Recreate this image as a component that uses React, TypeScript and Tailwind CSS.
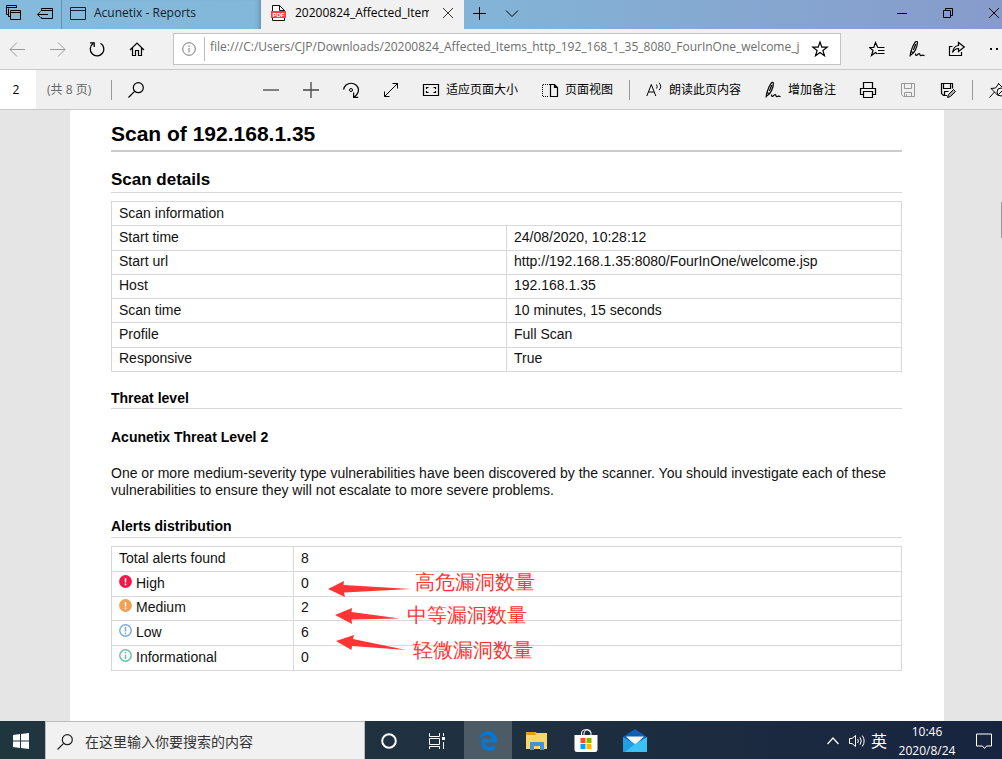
import React from 'react'
import { FaEdgeLegacy } from 'react-icons/fa6'

interface IconProps {
  children: React.ReactNode
  className?: string
}

function Icon({ children, className = '' }: IconProps) {
  return (
    <svg
      viewBox="0 0 16 16"
      className={`w-4 h-4 shrink-0 overflow-visible ${className}`}
      fill="none"
      stroke="currentColor"
      aria-hidden="true"
    >
      {children}
    </svg>
  )
}

function PenIcon() {
  return (
    <Icon>
      <path
        d="M1 15.5 L1.8 11 Q3.4 5 6 1.3 Q7.6 -.3 8.4 1 Q8.6 4 6.6 8.5 Q5 12.5 1.8 14 M2.2 10.8 L4.8 11.6 M4.4 9 L6.8 3 M6.6 12.6 Q6.2 15 8 14.2 Q10 11.8 10.8 13 Q10.8 15 12.4 14.4 Q13.6 13.6 15.5 14.6"
        strokeWidth="1.2"
      />
    </Icon>
  )
}

function SearchIcon() {
  return (
    <Icon>
      <circle cx="10.3" cy="5.7" r="5" strokeWidth="1.2" />
      <path d="M6.6 9.4 L.5 15.5" strokeWidth="1.2" />
    </Icon>
  )
}

function Separator() {
  return <span className="w-px h-5 -mx-2 shrink-0 bg-[#999]" />
}

interface ToolButtonProps {
  title: string
  label?: string
  className?: string
  children: React.ReactNode
}

function ToolButton({ title, label, className = '', children }: ToolButtonProps) {
  return (
    <button type="button" title={title} className={`flex items-center gap-[7px] shrink-0 whitespace-nowrap ${className}`}>
      {children}
      {label && <span>{label}</span>}
    </button>
  )
}

function TabStrip() {
  return (
    <div className="flex items-stretch h-[29px] text-[#16202a] bg-linear-to-r from-[#84bbdc] via-[#83b3d6] to-[#879bcb]">
      <div className="flex items-center gap-4 pl-[5px] pr-2 pb-[3px] border-r border-[#6692b0] text-black">
        <ToolButton title="标签页">
          <Icon>
            <path d="M3 9.5 H1.5 V.5 H11.5 V3 M1.5 2.5 H11.5 M5 11.5 H3.5 V3.5 M5.5 5.5 H15.5 V14.5 H5.5 Z M5.5 7.5 H15.5" />
          </Icon>
        </ToolButton>
        <ToolButton title="搁置标签页">
          <Icon>
            <path d="M4.5 6 V3.5 H15.5 V13.5 H4.5 V12 M4.5 5.5 H15.5 M.5 9.5 H11 M3.5 6.5 L.5 9.5 L3.5 12.5" />
          </Icon>
        </ToolButton>
      </div>
      <button type="button" className="flex items-center gap-2 w-[199px] pl-2 pb-[3px] shadow-[inset_-5px_0_5px_-4px_rgba(40,80,120,0.45)]">
        <Icon>
          <path d="M.5 2.5 H15.5 V14.5 H.5 Z M.5 5.5 H15.5" />
        </Icon>
        <span>Acunetix - Reports</span>
      </button>
      <div className="flex items-center w-[203px] px-2 bg-[#f1f1f1]">
        <svg viewBox="0 0 18 18" className="w-[18px] h-[18px] shrink-0 -mt-[3px]" aria-hidden="true">
          <path d="M3.5 1.5 H10.5 L15.5 6.5 V16.5 H3.5 Z" fill="#fff" stroke="#111" />
          <path d="M10.5 1.5 V6.5 H15.5" fill="none" stroke="#111" />
          <rect x="2" y="7" width="15" height="7" fill="#f34045" />
          <text x="9.5" y="12.7" fontSize="6" fontWeight="bold" fontFamily="Liberation Sans" textAnchor="middle" fill="#fff">PDF</text>
        </svg>
        <span className="w-[134px] ml-2 mb-[3px] overflow-hidden whitespace-nowrap text-black">20200824_Affected_Items_http</span>
        <ToolButton title="关闭标签页" className="ml-auto mb-[3px]">
          <Icon className="text-[#333]">
            <path d="M3 3 L13 13 M13 3 L3 13" />
          </Icon>
        </ToolButton>
      </div>
      <div className="flex items-center gap-4 pl-2 pb-[3px] text-black">
        <ToolButton title="新建标签页">
          <Icon>
            <path d="M7.5 2 V15 M1 8.5 H14" />
          </Icon>
        </ToolButton>
        <ToolButton title="标签页预览">
          <Icon>
            <path d="M2 5.5 L8 11.5 L14 5.5" />
          </Icon>
        </ToolButton>
      </div>
      <div className="flex items-center gap-[30px] ml-auto pb-[3px] text-black">
        <ToolButton title="最小化">
          <Icon>
            <path d="M3 8.5 H13" />
          </Icon>
        </ToolButton>
        <ToolButton title="还原">
          <Icon>
            <path d="M3.5 5.5 H10.5 V12.5 H3.5 Z M5.5 5 V3.5 H12.5 V10.5 H11" />
          </Icon>
        </ToolButton>
        <ToolButton title="关闭">
          <Icon>
            <path d="M3 3 L13 13 M13 3 L3 13" />
          </Icon>
        </ToolButton>
      </div>
    </div>
  )
}

function AddressBar() {
  return (
    <div className="flex items-center h-[41px] pl-[9px] bg-[#f1f1f1] border-b border-[#c9c9c9] text-black">
      <div className="flex gap-6">
        <ToolButton title="后退" className="text-[#999]">
          <Icon>
            <path d="M1 8.5 H16 M8 1.5 L1 8.5 L8 15.5" />
          </Icon>
        </ToolButton>
        <ToolButton title="前进" className="text-[#999]">
          <Icon>
            <path d="M1 8.5 H16 M9 1.5 L16 8.5 L9 15.5" />
          </Icon>
        </ToolButton>
        <ToolButton title="刷新">
          <Icon>
            <path d="M11.5 2.2 A6.8 6.8 0 1 1 4 2.6 M1 1.8 H5.2 V6" strokeWidth="1.3" />
          </Icon>
        </ToolButton>
        <ToolButton title="主页">
          <Icon>
            <path d="M1 9 L8 2 L15 9 M3.5 7 V14.5 H6.5 V9.5 H9.5 V14.5 H12.5 V7" strokeWidth="1.2" />
          </Icon>
        </ToolButton>
      </div>
      <div className="flex items-center flex-1 h-8 ml-7 mr-7 px-2 bg-white border border-[#c4c4c4]">
        <svg viewBox="0 0 14 14" className="w-[14px] h-[14px] shrink-0" fill="none" stroke="#777" aria-hidden="true">
          <circle cx="7" cy="7" r="6.3" />
          <path d="M7 6 V10.5 M7 3.5 V5" />
        </svg>
        <span className="w-px h-6 ml-2 mr-[5px] bg-[#bbb]" />
        <input
          type="text"
          aria-label="地址"
          className="flex-1 min-w-0 mb-1 mr-3 text-[#6d6d6d] outline-none"
          defaultValue="file:///C:/Users/CJP/Downloads/20200824_Affected_Items_http_192_168_1_35_8080_FourInOne_welcome_jsp.pdf"
        />
        <ToolButton title="收藏" className="mr-1">
          <Icon>
            <path d="M8 1 L9.8 6.2 H15.2 L10.9 9.5 L12.5 14.8 L8 11.6 L3.5 14.8 L5.1 9.5 L.8 6.2 H6.2 Z" strokeWidth="1.2" />
          </Icon>
        </ToolButton>
      </div>
      <div className="flex gap-6 w-[133px] overflow-hidden">
        <ToolButton title="收藏夹">
          <Icon>
            <path d="M15.5 6.5 H8.8 L6.5 1.5 L4.8 6.5 H.5 L4 9.5 L2.5 14.5 L6.5 11.6 L8.5 13 M9 9.5 H15.5 M9 12.5 H15.5" strokeWidth="1.2" />
          </Icon>
        </ToolButton>
        <ToolButton title="添加笔记">
          <PenIcon />
        </ToolButton>
        <ToolButton title="共享">
          <Icon>
            <path d="M3.5 5.5 H.5 V14.5 H12.5 V11 M3.5 11.5 Q4.5 5 9.5 4.5 V1.5 L15.3 6 L9.5 10.5 V7.5 Q6 7.5 3.5 11.5 Z" strokeWidth="1.2" />
          </Icon>
        </ToolButton>
        <ToolButton title="更多">
          <Icon>
            <path d="M1 8 H3 M7 8 H9 M13 8 H15" strokeWidth="2" />
          </Icon>
        </ToolButton>
      </div>
    </div>
  )
}

function PdfToolbar() {
  return (
    <div className="flex items-center h-10 overflow-hidden bg-[#f0f0f0] border-b border-[#c9c9c9] text-black">
      <input type="text" aria-label="页码" defaultValue="2" className="w-9 h-full pr-1 bg-white text-center" />
      <span className="ml-[11px] text-[#666]">(共 8 页)</span>
      <span className="w-px h-5 ml-5 mr-4 bg-[#999]" />
      <ToolButton title="查找">
        <SearchIcon />
      </ToolButton>
      <div className="flex items-center gap-6 ml-auto -mr-[3px] shrink-0">
        <ToolButton title="缩小" className="text-[#444]">
          <Icon>
            <path d="M0 8 H16" strokeWidth="1.3" />
          </Icon>
        </ToolButton>
        <ToolButton title="放大" className="text-[#444]">
          <Icon>
            <path d="M0 8 H16 M8 0 V16" strokeWidth="1.3" />
          </Icon>
        </ToolButton>
        <ToolButton title="旋转">
          <Icon>
            <path d="M.6 7.6 A7.5 7.2 0 0 1 15.5 7.6 Q15.5 12 11.2 15 M10.6 10.5 V15.4 H15.2" strokeWidth="1.2" />
            <circle cx="8" cy="8" r="1.5" />
          </Icon>
        </ToolButton>
        <ToolButton title="全屏">
          <Icon>
            <path d="M1.5 14.5 L14.5 1.5 M9.5 1.5 H14.5 V6.5 M1.5 9.5 V14.5 H6.5" />
          </Icon>
        </ToolButton>
        <ToolButton title="适应页面大小" label="适应页面大小">
          <Icon>
            <path d="M.5 2.5 H15.5 V13.5 H.5 Z M3.5 7 V5.5 H5.5 M10.5 5.5 H12.5 V7 M12.5 9 V10.5 H10.5 M5.5 10.5 H3.5 V9" strokeWidth="1.2" />
          </Icon>
        </ToolButton>
        <ToolButton title="页面视图" label="页面视图">
          <Icon>
            <path d="M8 2.5 H.5 V14.5 H7" strokeDasharray="1 1" />
            <path d="M8.5 2.5 H12.5 L15.5 5.5 V14.5 H8.5 Z M12.5 2.5 V5.5 H15.5" strokeWidth="1.2" />
          </Icon>
        </ToolButton>
        <Separator />
        <ToolButton title="朗读此页内容" label="朗读此页内容">
          <Icon>
            <path d="M.8 14 L5.3 2.5 L9.8 14 M2.4 10 H8.2 M10.5 2.5 Q12 4.5 10.5 6.5 M13 .8 Q16.5 4.5 13 8.2" />
          </Icon>
        </ToolButton>
        <ToolButton title="增加备注" label="增加备注">
          <PenIcon />
        </ToolButton>
        <ToolButton title="打印">
          <Icon>
            <path d="M3.5 6 V.5 H12.5 V6 M3.5 12.5 H.5 V6.5 H15.5 V12.5 H12.5 M3.5 9.5 H12.5 V15.5 H3.5 Z" strokeWidth="1.2" />
          </Icon>
        </ToolButton>
        <ToolButton title="保存" className="text-[#999]">
          <Icon>
            <path d="M1.5 1.5 H14.5 V14.5 H3.5 L1.5 12.5 Z M4.5 1.5 V6.5 H11.5 V1.5 M4.5 14.5 V10.5 H11.5 V14.5 M6.5 12 V14.5" />
          </Icon>
        </ToolButton>
        <ToolButton title="另存为">
          <Icon>
            <path d="M7 13.5 H3.5 L1.5 11.5 V1.5 H12.5 V6.5 M3.5 1.5 V6.5 H10.5 V1.5 M4.5 13.5 V9.5 H8.5" strokeWidth="1.2" />
            <path d="M7.5 15.5 L8.5 12.5 L13.5 7.5 L15.5 9.5 L10.5 14.5 Z" fill="#aaa" />
          </Icon>
        </ToolButton>
        <Separator />
        <ToolButton title="固定工具栏">
          <Icon>
            <path d="M9 1 L15 7 M9.5 2 L6.5 6 L2 6.5 L9.5 14 M5.5 10 L.5 15.5" />
            <circle cx="12" cy="10" r="4" />
            <path d="M9.5 12.5 L14.5 7.5" />
          </Icon>
        </ToolButton>
      </div>
    </div>
  )
}

const scanRows = [
  { label: 'Start time', value: '24/08/2020, 10:28:12' },
  { label: 'Start url', value: 'http://192.168.1.35:8080/FourInOne/welcome.jsp' },
  { label: 'Host', value: '192.168.1.35' },
  { label: 'Scan time', value: '10 minutes, 15 seconds' },
  { label: 'Profile', value: 'Full Scan' },
  { label: 'Responsive', value: 'True' }
]

const alertRows = [
  { label: 'High', value: 0, fill: '#f5174a', stroke: '#f5174a', mark: '#fff', info: false },
  { label: 'Medium', value: 2, fill: '#f0a050', stroke: '#f0a050', mark: '#fff', info: false },
  { label: 'Low', value: 6, fill: '#fff', stroke: '#77abe4', mark: '#77abe4', info: false },
  { label: 'Informational', value: 0, fill: '#fff', stroke: '#5cc3a4', mark: '#5cc3a4', info: true }
]

interface CellProps {
  children: React.ReactNode
  colSpan?: number
  className?: string
}

function Cell({ children, colSpan, className = '' }: CellProps) {
  return (
    <td colSpan={colSpan} className={`px-[7px] pb-[2px] border border-[#d8d8d8] ${className}`}>
      {children}
    </td>
  )
}

function Annotations() {
  return (
    <div className="absolute left-[217px] top-[22px] w-[220px] h-[100px] text-[20px] leading-7 text-[#ff3535]">
      <svg viewBox="0 0 90 90" className="absolute left-0 top-0 w-[90px] h-[90px]" fill="#ff3535" aria-hidden="true">
        <path d="M0 21 L16 13 L15.5 17 L83 21 L16 24.5 L17 29 Z" />
        <path d="M7 47 L24 40 L23.5 44 L72 50.5 L23.5 51.5 L24 56 Z" />
        <path d="M8 73 L26 67 L25 71 L78 82 L24 78 L23.5 82 Z" />
      </svg>
      <span className="absolute left-[87px] top-0 whitespace-nowrap">高危漏洞数量</span>
      <span className="absolute left-[79px] top-[33px] whitespace-nowrap">中等漏洞数量</span>
      <span className="absolute left-[85px] top-[68px] whitespace-nowrap">轻微漏洞数量</span>
    </div>
  )
}

function Report() {
  return (
    <article className="flex-1 pt-3 pl-[41px] pr-[42px] pb-12 bg-white text-sm leading-4 text-[#111] font-['Liberation_Sans',Arial,sans-serif]">
      <h1 className="pb-1 border-b-2 border-[#ccc] text-[21px] leading-6 font-bold text-black">Scan of 192.168.1.35</h1>
      <h2 className="mt-[18px] pb-[2px] border-b border-[#d8d8d8] text-[17px] leading-5 font-bold text-black">Scan details</h2>

      <table className="w-full h-[171px] mt-2 border-collapse table-fixed">
        <tbody>
          <tr>
            <Cell colSpan={2}>Scan information</Cell>
          </tr>
          {scanRows.map((row) => (
            <tr key={row.label}>
              <Cell>{row.label}</Cell>
              <Cell>{row.value}</Cell>
            </tr>
          ))}
        </tbody>
      </table>

      <h3 className="mt-[18px] pb-[2px] border-b border-[#d8d8d8] font-bold text-black">Threat level</h3>
      <h4 className="mt-5 font-bold text-black">Acunetix Threat Level 2</h4>
      <p className="mt-5 leading-[17px]">
        One or more medium-severity type vulnerabilities have been discovered by the scanner. You should investigate each of these
        vulnerabilities to ensure they will not escalate to more severe problems.
      </p>

      <h3 className="mt-[19px] pb-[3px] border-b border-[#d8d8d8] font-bold text-black">Alerts distribution</h3>
      <div className="relative mt-2">
        <table className="w-full h-[125px] border-collapse table-fixed">
          <tbody>
            <tr>
              <Cell className="w-[182px]">Total alerts found</Cell>
              <Cell>8</Cell>
            </tr>
            {alertRows.map((row) => (
              <tr key={row.label}>
                <Cell>
                  <span className="flex items-start gap-1">
                    <svg viewBox="0 0 13 13" className="w-[13px] h-[13px]" aria-hidden="true">
                      <circle cx="6.5" cy="6.5" r="5.7" fill={row.fill} stroke={row.stroke} strokeWidth="1.4" />
                      <path
                        d={row.info ? 'M6.5 5.8 V10 M6.5 3 V4.6' : 'M6.5 3 V7.4 M6.5 8.6 V10.2'}
                        stroke={row.mark}
                        strokeWidth="1.5"
                      />
                    </svg>
                    {row.label}
                  </span>
                </Cell>
                <Cell>{row.value}</Cell>
              </tr>
            ))}
          </tbody>
        </table>
        <Annotations />
      </div>
    </article>
  )
}

function Taskbar() {
  return (
    <div className="flex items-start h-[38px] overflow-hidden text-white bg-linear-to-r from-[#20363f] via-[#1f3040] to-[#17243f]">
      <button type="button" title="开始" className="flex items-center justify-center w-[45px] h-10 pr-1">
        <Icon>
          <path d="M0 2 L7 1 V7.5 H0 Z M8 .9 L16 0 V7.5 H8 Z M0 8.5 H7 V15 L0 14 Z M8 8.5 H16 V16 L8 15.1 Z" fill="#fff" stroke="none" />
        </Icon>
      </button>
      <label className="flex items-center gap-3 w-80 h-10 pl-[11px] bg-[#f1f1f1] border-t border-x border-[#bbb] text-[#222]">
        <SearchIcon />
        <input
          type="text"
          aria-label="搜索"
          placeholder="在这里输入你要搜索的内容"
          className="flex-1 min-w-0 text-sm placeholder:text-[#333] outline-none"
        />
      </label>
      <button type="button" title="Cortana" className="flex items-center justify-center w-12 h-10">
        <Icon>
          <circle cx="8" cy="8" r="6.8" strokeWidth="2" />
        </Icon>
      </button>
      <button type="button" title="任务视图" className="flex items-center justify-center w-[51px] h-10 pr-[3px]">
        <Icon>
          <path d="M.5 0 V3.5 H10.5 V0 M.5 5.5 H10.5 V11.5 H.5 Z M.5 16 V13.5 H10.5 V16 M14.5 0 V3 M14.5 9 V16" />
          <path d="M13 4 H16 V7 H13 Z" fill="#fff" stroke="none" />
        </Icon>
      </button>
      <button type="button" title="Microsoft Edge" className="flex items-center justify-center w-12 h-10 bg-[#4c5b66]">
        <FaEdgeLegacy className="w-5 h-5 text-[#0078d7]" />
      </button>
      <button type="button" title="文件资源管理器" className="flex items-center justify-center w-[50px] h-10">
        <svg viewBox="0 0 22 18" className="w-[22px] h-[18px]" aria-hidden="true">
          <path d="M0 0 H9 L11 1 H21 V17 H0 Z" fill="#fcd667" />
          <path d="M0 0 H9 L10 3 H0 Z" fill="#e3a008" />
          <path d="M4 18 V11 Q4 10 5 10 H17 Q18 10 18 11 V18 H14 V14 H8 V18 Z" fill="#3f94dc" />
        </svg>
      </button>
      <button type="button" title="Microsoft Store" className="flex items-start justify-center w-12 h-10 pt-2">
        <svg viewBox="0 0 24 23" className="w-6 h-[23px]" aria-hidden="true">
          <path d="M7.5 7 V4 Q7.5 .6 11.5 .6 H13 Q17 .6 17 4 V7 M10 6 V4 Q10 2 13 .6 M17 4 Q16 2 13 .6" fill="none" stroke="#fff" />
          <path d="M.5 6 H23.5 V21 Q23.5 23 21 23 H3 Q.5 23 .5 21 Z" fill="#fff" />
          <path d="M6.5 9 H11.5 V14 H6.5 Z" fill="#f25022" />
          <path d="M12.5 9 H17.5 V14 H12.5 Z" fill="#7fba00" />
          <path d="M6.5 15 H11.5 V20 H6.5 Z" fill="#00a4ef" />
          <path d="M12.5 15 H17.5 V20 H12.5 Z" fill="#ffb900" />
        </svg>
      </button>
      <button type="button" title="邮件" className="flex items-start justify-center w-[50px] h-10 pt-2">
        <svg viewBox="0 0 24 23" className="w-6 h-[23px]" aria-hidden="true">
          <path d="M0 8 L12 0 L24 8 V22 H0 Z" fill="#0f5fb5" />
          <path d="M3 7.5 H21 L12 16 Z" fill="#f4f6f8" />
          <path d="M0 8 L12 15 L24 23 H0 Z" fill="#1f9fe4" />
          <path d="M24 8 L12 15 L2 23 H24 Z" fill="#3dc1f3" />
        </svg>
      </button>
      <div className="flex items-center h-10 ml-auto pr-[10px]">
        <button type="button" title="显示隐藏的图标" className="flex w-6">
          <Icon>
            <path d="M2.5 11 L8 5 L13.5 11" strokeWidth="1.2" />
          </Icon>
        </button>
        <button type="button" title="音量" className="flex w-[22px]">
          <Icon>
            <path d="M.5 5.5 H3 L6.5 2.5 V13.5 L3 10.5 H.5 Z M8.7 6 Q10 8 8.7 10 M11 4.3 Q13.5 8 11 11.7 M13.3 2.6 Q17 8 13.3 13.4" />
          </Icon>
        </button>
        <button type="button" title="输入法" className="text-base leading-5">英</button>
        <div className="w-[60px] ml-[10px] text-center leading-[19px]">
          <div>10:46</div>
          <div>2020/8/24</div>
        </div>
        <button type="button" title="操作中心" className="ml-[19px]">
          <Icon>
            <path d="M.5 1 H15.5 V13 H10.5 L8.5 15.5 L6.5 13 H.5 Z" />
          </Icon>
        </button>
      </div>
    </div>
  )
}

export default function App() {
  return (
    <div className="flex flex-col min-h-screen overflow-hidden text-xs font-['Open_Sans','Noto_Sans_CJK_SC',sans-serif]">
      <TabStrip />
      <AddressBar />
      <PdfToolbar />
      <main className="relative flex flex-1 pl-[70px] pr-[58px] bg-[#e5e5e5]">
        <Report />
        <span className="absolute right-0 top-[92px] w-px h-9 bg-[#999]" />
      </main>
      <Taskbar />
    </div>
  )
}
